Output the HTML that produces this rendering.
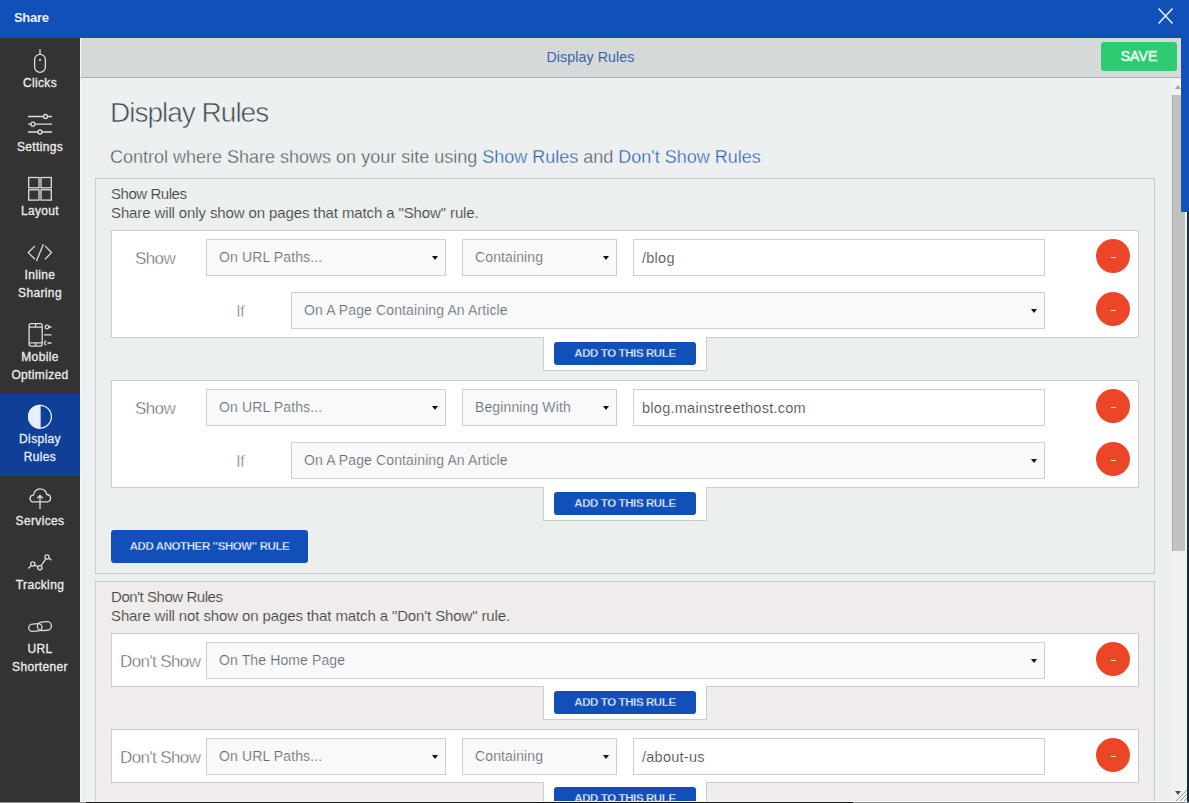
<!DOCTYPE html>
<html><head><meta charset="utf-8"><style>
*{box-sizing:border-box;margin:0;padding:0}
html,body{width:1189px;height:803px;overflow:hidden;background:#1d2a33;font-family:"Liberation Sans",sans-serif;position:relative}
.a{position:absolute}
#hdr{left:0;top:0;width:1189px;height:38px;background:#1050b8}
#hdr .t{left:14px;top:10px;font-size:13px;font-weight:bold;color:#e6f2ff;letter-spacing:-0.3px}
#rstrip{left:1181px;top:38px;width:8px;height:174px;background:#1050b8}
#rstrip2{left:1187px;top:212px;width:2px;height:591px;background:#1b2a40}
#side{left:0;top:38px;width:80px;height:764px;background:#333}
.it{position:absolute;left:0;width:80px;color:#ededed;font-size:12px;text-align:center;line-height:18px;letter-spacing:0.35px;-webkit-text-stroke:0.3px #ededed}
.it svg{position:absolute;left:0;top:0}
.it .lb{position:absolute;left:0;width:80px;top:36px}
.it.act{background:#0f3f96;color:#e6eeff;-webkit-text-stroke:0.3px #e6eeff}
#bar{left:80px;top:38px;width:1101px;height:40px;background:#d6d9da;border-bottom:1px solid #a9acad}
#bar .t{left:0;width:1021px;text-align:center;top:11px;font-size:14.2px;color:#3c64a4;letter-spacing:0.1px}
#save{left:1021px;top:4px;width:76px;height:29px;background:#2ecc71;border-radius:3px;color:#effff4;font-size:14px;text-align:center;line-height:28px;letter-spacing:0.1px;-webkit-text-stroke:0.5px #effff4}
#clip{left:80px;top:78px;width:1091px;height:724px;overflow:hidden;background:#ecf0f1}
#in{left:-80px;top:-78px;width:1181px;height:900px}
#sb{left:1171px;top:78px;width:16px;height:724px;background:#f1f1f1}
#thumb{left:1172px;top:95px;width:13px;height:456px;background:#c1c1c1;border-left:1px solid #a9a9a9}
#up{left:1175px;top:85px;border-left:3.5px solid transparent;border-right:3.5px solid transparent;border-bottom:4px solid #a3a3a3}
#dn{left:1175px;top:791px;border-left:3.5px solid transparent;border-right:3.5px solid transparent;border-top:4px solid #505050}
#bottom{left:86px;top:802px;width:767px;height:1px;background:#111}
#bottom2{left:0;top:802px;width:1189px;height:1px;background:#8d8d8d}
#wl{left:80px;top:38px;width:1px;height:764px;background:#f7f9fa}
#wb{left:80px;top:801px;width:1107px;height:1px;background:#f9fafa}
#wt{left:80px;top:78px;width:1091px;height:1px;background:#f3f5f6}
.h1{left:110px;top:97px;font-size:28px;color:#43484c;letter-spacing:-1px;white-space:nowrap;-webkit-text-stroke:0.6px #ecf0f1}
.sub{left:110px;top:147px;font-size:18px;color:#4f5458;white-space:nowrap;-webkit-text-stroke:0.35px #ecf0f1}
.sub b{font-weight:normal;color:#255bab}
.box{left:95px;width:1060px;border:1px solid #c9cccb}
.box.show{background:#ebefed}
.box.dont{background:#efeceb}
.bh{left:111px;font-size:15px;letter-spacing:-0.12px;color:#454545;-webkit-text-stroke:0.15px #ebefed;white-space:nowrap;line-height:19px}
.rule{left:111px;width:1028px;background:#fff;border:1px solid #cbcdcd}
.lab{font-size:17px;color:#555;-webkit-text-stroke:0.45px #fff;letter-spacing:-0.6px;white-space:nowrap}
.sel{height:37px;background:#f9f9f9;border:1px solid #cfcfcf;font-size:14px;color:#616a75;line-height:35px;padding-left:12px;letter-spacing:0.12px;-webkit-text-stroke:0.2px #f9f9f9;white-space:nowrap}
.sel:after{content:"";position:absolute;right:7px;top:16px;border-left:3.75px solid transparent;border-right:3.75px solid transparent;border-top:4.5px solid #111}
.inp{height:37px;background:#fff;border:1px solid #cfcfcf;font-size:14.5px;color:#4f4f4f;line-height:37px;padding-left:8px;white-space:nowrap;letter-spacing:0.26px;-webkit-text-stroke:0.15px #fff}
.rm{width:34px;height:34px;border-radius:50%;background:#ec4527}
.rm:after{content:"";position:absolute;left:15px;top:17.5px;width:5px;height:1px;background:#ffd8c8}
.tab{width:164px;height:34px;background:#fff;border:1px solid #cbcdcd;border-top:none}
.btn{background:#1150b8;border-radius:3px;color:#eef4ff;font-weight:bold;text-align:center;white-space:nowrap;letter-spacing:-0.4px;-webkit-text-stroke:0.3px #1150b8}
.tab .btn{left:10px;top:5px;width:142px;height:23px;line-height:23px;font-size:11.5px}
</style></head><body>
<div id="hdr" class="a"><div class="t a">Share</div>
<svg class="a" style="left:1157px;top:7px" width="17" height="18"><path d="M1.5 1.5L15.5 16.5M15.5 1.5L1.5 16.5" stroke="#e8f4ff" stroke-width="1.5"/></svg>
</div>
<div id="side" class="a">
<div class="it" style="top:0px;height:64px"><svg width="80" height="40" fill="none" stroke="#dcdcdc" stroke-width="1.3"><path d="M40 11.2V16.3" /><rect x="34.6" y="16.3" width="10.8" height="18" rx="5.4"/><rect x="39.1" y="21" width="1.8" height="1.8" fill="#ddd" stroke="none"/></svg><div class="lb">Clicks</div></div>
<div class="it" style="top:64px;height:64px"><svg width="80" height="40" fill="none" stroke="#dcdcdc" stroke-width="1.3"><path d="M28 14.5H52M28 22.2H52M28 30H52"/><circle cx="45.5" cy="14.5" r="2" fill="#333"/><circle cx="33" cy="22.2" r="2" fill="#333"/><circle cx="40" cy="30" r="2" fill="#333"/></svg><div class="lb">Settings</div></div>
<div class="it" style="top:128px;height:64px"><svg width="80" height="40" fill="none" stroke="#dcdcdc" stroke-width="1.3"><rect x="28.7" y="11.5" width="10.3" height="10.3"/><rect x="41" y="11.5" width="10.3" height="10.3"/><rect x="28.7" y="23.8" width="10.3" height="10.3"/><rect x="41" y="23.8" width="10.3" height="10.3"/></svg><div class="lb">Layout</div></div>
<div class="it" style="top:192px;height:82px"><svg width="80" height="40" fill="none" stroke="#dcdcdc" stroke-width="1.3"><path d="M35 15.9L28.3 22.6L35 29.3M45 15.9L51.5 22.6L45 29.3M43.4 14.3L36.4 31.1"/></svg><div class="lb">Inline<br>Sharing</div></div>
<div class="it" style="top:274px;height:82px"><svg width="80" height="40" fill="none" stroke="#dcdcdc" stroke-width="1.3"><rect x="29.1" y="11.7" width="13.1" height="22.4" rx="2"/><path d="M29.1 15.2H42.2M29.1 30.8H42.2M35.6 11.7V15.2M35.6 30.8V34.1M48.8 15H51.5M44 22.8H51.5M47.5 31H51.5"/><circle cx="47" cy="15" r="1.8"/><path d="M46.3 29.2A1.8 1.8 0 0 0 46.3 32.8"/></svg><div class="lb">Mobile<br>Optimized</div></div>
<div class="it" style="top:438px;height:64px"><svg width="80" height="40" fill="none" stroke="#dcdcdc" stroke-width="1.3"><path d="M32.2 25.8A3.5 3.5 0 0 1 33.51 19.06A6.7 6.7 0 0 1 46.82 18.48A3.7 3.7 0 0 1 47.6 25.8Z"/><path d="M40 19.5V33M37.2 22.2L40 19.5L42.8 22.2"/></svg><div class="lb">Services</div></div>
<div class="it" style="top:502px;height:64px"><svg width="80" height="40" fill="none" stroke="#dcdcdc" stroke-width="1.3"><path d="M28.3 28.5L31.2 25.6M34.6 25L38.1 26.9M41 25.9L45.8 18.9M48.9 18.3L51.5 20.3"/><circle cx="32.8" cy="24" r="2.1"/><circle cx="39.9" cy="27.8" r="2.1"/><circle cx="47" cy="17" r="2.1"/></svg><div class="lb">Tracking</div></div>
<div class="it" style="top:566px;height:82px"><svg width="80" height="40" fill="none" stroke="#dcdcdc" stroke-width="1.3"><rect x="28.7" y="19.9" width="13.3" height="7.2" rx="3.6" transform="rotate(-4 35 23.5)"/><rect x="37.4" y="17.9" width="14" height="8.6" rx="4.3" transform="rotate(-4 44 22)"/></svg><div class="lb">URL<br>Shortener</div></div>
<div class="it act" style="top:356px;height:82px"><svg width="80" height="40" fill="none" stroke="#e6eeff" stroke-width="1.3"><circle cx="40" cy="22.7" r="11.4"/><path d="M40 11.3A11.4 11.4 0 0 0 40 34.1Z" fill="#e6eeff"/></svg><div class="lb">Display<br>Rules</div></div>
</div>
<div id="clip" class="a"><div id="in" class="a">
<div class="a h1">Display Rules</div>
<div class="a sub">Control where Share shows on your site using <b>Show Rules</b> and <b>Don't Show Rules</b></div>
<div class="a box show" style="top:178px;height:396px"></div>
<div class="a bh" style="top:184px"><span style="letter-spacing:-0.45px">Show Rules</span><br>Share will only show on pages that match a "Show" rule.</div>
<div class="a rule" style="top:230px;height:108px"></div>
<div class="a lab" style="left:135px;top:249px">Show</div>
<div class="a sel" style="left:206px;top:239px;width:240px">On URL Paths...</div>
<div class="a sel" style="left:462px;top:239px;width:155px">Containing</div>
<div class="a inp" style="left:633px;top:239px;width:412px">/blog</div>
<div class="a rm" style="left:1096px;top:239px"></div>
<div class="a lab" style="left:236px;top:302px;color:#7a7a7a">If</div>
<div class="a sel" style="left:291px;top:292px;width:754px">On A Page Containing An Article</div>
<div class="a rm" style="left:1096px;top:292px"></div>
<div class="a tab" style="left:543px;top:337px"><div class="a btn">ADD TO THIS RULE</div></div>
<div class="a rule" style="top:380px;height:108px"></div>
<div class="a lab" style="left:135px;top:399px">Show</div>
<div class="a sel" style="left:206px;top:389px;width:240px">On URL Paths...</div>
<div class="a sel" style="left:462px;top:389px;width:155px">Beginning With</div>
<div class="a inp" style="left:633px;top:389px;width:412px">blog.mainstreethost.com</div>
<div class="a rm" style="left:1096px;top:389px"></div>
<div class="a lab" style="left:236px;top:452px;color:#7a7a7a">If</div>
<div class="a sel" style="left:291px;top:442px;width:754px">On A Page Containing An Article</div>
<div class="a rm" style="left:1096px;top:442px"></div>
<div class="a tab" style="left:543px;top:487px"><div class="a btn">ADD TO THIS RULE</div></div>
<div class="a btn" style="left:111px;top:530px;width:197px;height:33px;line-height:33px;font-size:11.5px">ADD ANOTHER "SHOW" RULE</div>
<div class="a box dont" style="top:581px;height:400px"></div>
<div class="a bh" style="top:587px"><span style="letter-spacing:-0.45px">Don't Show Rules</span><br>Share will not show on pages that match a "Don't Show" rule.</div>
<div class="a rule" style="top:633px;height:54px"></div>
<div class="a lab" style="left:120px;top:652px">Don't Show</div>
<div class="a sel" style="left:206px;top:642px;width:839px">On The Home Page</div>
<div class="a rm" style="left:1096px;top:642px"></div>
<div class="a tab" style="left:543px;top:686px"><div class="a btn">ADD TO THIS RULE</div></div>
<div class="a rule" style="top:729px;height:54px"></div>
<div class="a lab" style="left:120px;top:748px">Don't Show</div>
<div class="a sel" style="left:206px;top:738px;width:240px">On URL Paths...</div>
<div class="a sel" style="left:462px;top:738px;width:155px">Containing</div>
<div class="a inp" style="left:633px;top:738px;width:412px">/about-us</div>
<div class="a rm" style="left:1096px;top:738px"></div>
<div class="a tab" style="left:543px;top:782px"><div class="a btn">ADD TO THIS RULE</div></div>
</div></div>
<div id="sb" class="a"></div><div id="thumb" class="a"></div><div id="up" class="a"></div><div id="dn" class="a"></div><svg class="a" style="left:1174px;top:786px" width="14" height="16"><path d="M13 4L2 15M13 8L6 15M13 12L10 15" stroke="#9a9a9a" stroke-width="1"/></svg>
<div id="bar" class="a"><div class="t a">Display Rules</div><div id="save" class="a">SAVE</div></div>
<div id="rstrip" class="a"></div><div id="rstrip2" class="a"></div>
<div id="bottom2" class="a"></div><div id="bottom" class="a"></div><div id="wl" class="a"></div><div id="wb" class="a"></div><div id="wt" class="a"></div>
</body></html>
